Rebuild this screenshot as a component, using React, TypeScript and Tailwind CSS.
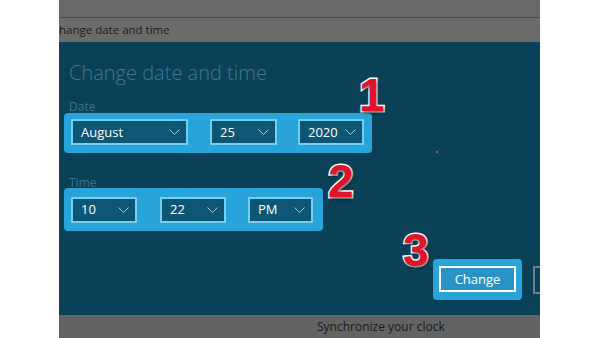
import React from "react";

const Chevron = () => (
  <svg width="11" height="6" viewBox="0 0 11 6" className="shrink-0">
    <path d="M0.5 0.5 L5.5 5.5 L10.5 0.5" fill="none" stroke="#a9c9d8" strokeWidth="1" />
  </svg>
);

const Select = ({ label, w }: { label: string; w: string }) => (
  <div
    className={`${w} h-[26px] border-2 border-[#72d0f3] bg-[#0d5674] flex items-center justify-between pl-[8px] pr-[6px]`}
  >
    <span className="text-white text-[13px] leading-none">{label}</span>
    <Chevron />
  </div>
);

const Num = ({ n, cls }: { n: string; cls: string }) => (
  <div
    className={`absolute ${cls} text-[46px] leading-none font-bold text-[#e2122b] [font-family:'Liberation_Sans',Arial,sans-serif] [-webkit-text-stroke:3px_white] [paint-order:stroke_fill] [text-shadow:1px_2px_3px_rgba(0,0,0,0.55)]`}
  >
    {n}
  </div>
);

export default function App() {
  return (
    <div className="relative w-[600px] h-[338px] bg-white flex overflow-hidden [font-family:'Open_Sans','Noto_Sans',sans-serif]">
      <div className="w-[59px] shrink-0" />
      <div className="w-[481px] shrink-0 flex flex-col">
        <div className="h-[17px] bg-[#686868]" />
        <div className="h-px bg-[#4c4c4c]" />
        <div className="h-[24px] bg-[#6b6b6b] flex items-center">
          <span className="text-[11.5px] text-[#1c1c1c] whitespace-nowrap">hange date and time</span>
        </div>
        <div className="h-[273px] bg-[#0a4157] flex flex-col overflow-hidden pl-[5px]">
          <div className="mt-[17px] h-[28px] pl-[5px] text-[20px] leading-[28px] font-light text-[#3b7a90] whitespace-nowrap">
            Change date and time
          </div>
          <div className="mt-[14px] h-[11px] pl-[5px] text-[12px] leading-[11px] text-[#3a7488]">Date</div>
          <div className="mt-[1px] w-[308px] h-[40px] rounded-[4px] bg-[#29a4db] flex items-center pl-[7px] pb-[2px]">
            <Select label="August" w="w-[117px]" />
            <div className="w-[22px]" />
            <Select label="25" w="w-[67px]" />
            <div className="w-[21px]" />
            <Select label="2020" w="w-[66px]" />
          </div>
          <div className="mt-[24px] h-[11px] pl-[5px] text-[12px] leading-[11px] text-[#3a7488]">Time</div>
          <div className="w-[259px] h-[43px] rounded-[4px] bg-[#29a4db] flex items-center pl-[7px]">
            <Select label="10" w="w-[66px]" />
            <div className="w-[23px]" />
            <Select label="22" w="w-[66px]" />
            <div className="w-[22px]" />
            <Select label="PM" w="w-[65px]" />
          </div>
          <div className="mt-[28px] flex items-start">
            <div className="ml-[369px] w-[89px] h-[41px] shrink-0 rounded-[4px] bg-[#29a4db] flex items-center justify-center pb-[1px]">
              <div className="w-[77px] h-[26px] border-2 border-white bg-[#2a93c6] flex items-center justify-center">
                <span className="text-white text-[13px] leading-none">Change</span>
              </div>
            </div>
            <div className="ml-[11px] mt-[7px] w-[78px] h-[28px] shrink-0 border-2 border-[#6f7f86]" />
          </div>
        </div>
        <div className="flex-1 bg-[#636363] flex items-center pl-[258px]">
          <span className="text-[12px] text-[#1a1a1a] whitespace-nowrap">Synchronize your clock</span>
        </div>
      </div>
      <div className="flex-1" />
      <Num n="1" cls="left-[359px] top-[72px]" />
      <Num n="2" cls="left-[328px] top-[158px]" />
      <Num n="3" cls="left-[403px] top-[227px]" />
      <div className="absolute left-[436px] top-[151px] w-[2px] h-[2px] bg-[#c0455a]" />
    </div>
  );
}
